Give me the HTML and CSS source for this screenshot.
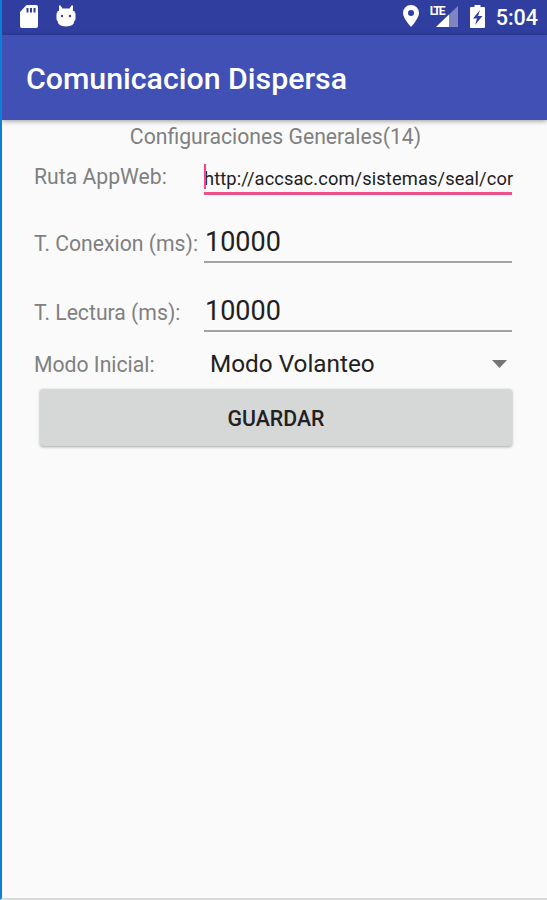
FILE: index.html
```html
<!DOCTYPE html>
<html lang="es">
<head>
    <meta charset="utf-8">
    <title>Comunicacion Dispersa</title>
    <link rel="stylesheet" href="styles.css">
</head>
<body>
    <div class="pantalla">
        <div class="barra-estado">
            <svg class="icono-sd" width="18" height="23" viewBox="0 0 18 23">
                <path fill="#fff" d="M6.500 0H16a2 2 0 0 1 2 2V21a2 2 0 0 1-2 2H2a2 2 0 0 1-2-2V7z"/>
                <path fill="#303f9f" d="M6.500 3h2v4.500h-2zM10 3h2v4.500h-2zM13.500 3h2v4.500h-2z"/>
            </svg>
            <svg class="icono-android" width="20" height="22" viewBox="0 0 20 22">
                <path fill="#fff" d="M4 0L6.500 3.500H13.500L16 0L17 1V6H18.500V15Q18.500 21.500 10 21.500T1.500 15V6H3V1z"/>
                <rect x="0.500" y="7" width="19" height="9" rx="2" fill="#fff"/>
                <circle cx="6" cy="11" r="1.200" fill="#303f9f"/>
                <circle cx="14" cy="11" r="1.200" fill="#303f9f"/>
            </svg>
            <svg class="icono-lugar" width="16" height="22" viewBox="0 0 16 22">
                <path fill="#fff" fill-rule="evenodd" d="M8 0a8 8 0 0 0-8 8c0 5.500 8 14 8 14s8-8.500 8-14a8 8 0 0 0-8-8zM8 5a3 3 0 1 1 0 6a3 3 0 0 1 0-6z"/>
            </svg>
            <div class="senal">
                <svg width="22" height="21" viewBox="0 0 22 21">
                    <path fill="#7d86c3" d="M22 0V21H0z"/>
                    <path fill="#fff" d="M13 8.600V21H0z"/>
                </svg>
                <span class="lte">LTE</span>
            </div>
            <svg class="icono-bateria" width="15" height="23" viewBox="0 0 15 23">
                <path fill="#fff" d="M4.500 0h6v2H14a1 1 0 0 1 1 1V22a1 1 0 0 1-1 1H1a1 1 0 0 1-1-1V3a1 1 0 0 1 1-1H4.500z"/>
                <path fill="#303f9f" d="M10 5L3 13.500H7L5 20L12.500 11H8z"/>
            </svg>
            <span class="hora">5:04</span>
        </div>
        <header class="barra-titulo">
            <h1>Comunicacion Dispersa</h1>
        </header>
        <form class="configuracion">
            <p class="subtitulo">Configuraciones Generales(14)</p>

            <div class="fila fila-ruta">
                <label for="ruta">Ruta AppWeb:</label>
                <div class="campo activo">
                    <input type="text" id="ruta" value="http://accsac.com/sistemas/seal/cor">
                    <span class="cursor"></span>
                </div>
            </div>
            <div class="fila fila-conexion">
                <label for="conexion">T. Conexion (ms):</label>
                <div class="campo">
                    <input type="text" id="conexion" value="10000">
                </div>
            </div>
            <div class="fila fila-lectura">
                <label for="lectura">T. Lectura (ms):</label>
                <div class="campo">
                    <input type="text" id="lectura" value="10000">
                </div>
            </div>
            <div class="fila fila-modo">
                <label>Modo Inicial:</label>
                <div class="selector">
                    <span>Modo Volanteo</span>
                    <svg width="15" height="8" viewBox="0 0 15 8">
                        <path fill="#757575" d="M0 0H15L7.500 8z"/>
                    </svg>
                </div>
            </div>

            <button type="button" class="guardar">GUARDAR</button>
        </form>
    </div>
</body>
</html>
```

FILE: styles.css
```css
body {
    margin: 0;
    font-family: Roboto, sans-serif;
    background-color: #fafafa;
}
.pantalla {
    box-sizing: border-box;
    height: 900px;
    border-left: 2px solid #0a7fd6;
    border-bottom: 2px solid #d9d9d9;
    overflow: hidden;
}
.barra-estado {
    display: flex;
    align-items: flex-start;
    box-sizing: border-box;
    height: 35px;
    padding: 5px 9px 0 18px;
    background-color: #303f9f;
    color: #fff;
}
.barra-estado svg {
    display: block;
    flex: none;
}
.icono-android {
    margin-left: 18px;
}
.icono-lugar {
    margin-left: auto;
}
.senal {
    position: relative;
    margin: 1px 0 0 17px;
}
.lte {
    position: absolute;
    left: -6px;
    top: 0;
    padding-right: 1px;
    font-size: 12px;
    line-height: 11px;
    font-weight: 700;
    letter-spacing: -1.7px;
    background-color: #303f9f;
}
.icono-bateria {
    margin-left: 12px;
}
.hora {
    margin-left: 11px;
    font-size: 21.5px;
    line-height: 25px;
    font-weight: 500;
}
.barra-titulo {
    display: flex;
    align-items: center;
    box-sizing: border-box;
    height: 85px;
    padding: 3px 0 0 24px;
    background-color: #4050b5;
    box-shadow: 0 1px 5px rgba(0, 0, 0, 0.4);
}
h1 {
    margin: 0;
    color: #fff;
    font-size: 30.3px;
    line-height: 36px;
    font-weight: 500;
}
.configuracion {
    padding: 0 35px 0 32px;
}
.subtitulo {
    margin: 0;
    padding: 4px 0 0 5px;
    line-height: 25px;
    font-size: 21.2px;
    color: #808080;
    text-align: center;
}
.fila {
    display: flex;
    align-items: flex-start;
}
label {
    width: 170px;
    flex: none;
    font-size: 21.2px;
    line-height: 26px;
    color: #808080;
    white-space: nowrap;
}
.campo {
    position: relative;
    flex: 1;
    min-width: 0;
    box-sizing: border-box;
    height: 36px;
    border-bottom: 2px solid #a3a3a3;
}
.campo input {
    display: block;
    width: 100%;
    height: 30px;
    padding: 0 0 0 1px;
    border: none;
    background: none;
    outline: none;
    box-sizing: border-box;
    font-family: inherit;
    font-size: 27px;
    color: #212121;
}
.campo.activo {
    height: 31px;
    margin-bottom: 1px;
    border-bottom: 3px solid #f0508a;
}
.campo.activo input {
    width: 311px;
    height: 28px;
    padding: 0;
    font-size: 18.3px;
    letter-spacing: 0.11px;
}
.cursor {
    position: absolute;
    left: 0;
    top: 0;
    width: 2px;
    height: 25px;
    background-color: #ff4081;
}
.fila-ruta {
    padding-top: 15px;
}
.fila-conexion {
    padding-top: 31px;
}
.fila-lectura {
    padding-top: 33px;
}
.fila-conexion label,
.fila-lectura label {
    padding-top: 4px;
}
.fila-modo {
    padding-top: 19px;
}
.fila-modo label {
    padding-top: 1px;
}
.selector {
    flex: 1;
    display: flex;
    align-items: center;
    justify-content: space-between;
    padding: 0 5px 0 6px;
    font-size: 24.3px;
    line-height: 26px;
    color: #212121;
}
.guardar {
    display: block;
    box-sizing: border-box;
    width: 472px;
    height: 57px;
    margin: 11px 0 0 6px;
    padding: 1px 0 0;
    border: none;
    border-radius: 3px;
    background-color: #d6d7d7;
    box-shadow: 0 1px 3px rgba(0, 0, 0, 0.35);
    font-family: inherit;
    font-size: 21.3px;
    font-weight: 500;
    color: #212121;
}
```
